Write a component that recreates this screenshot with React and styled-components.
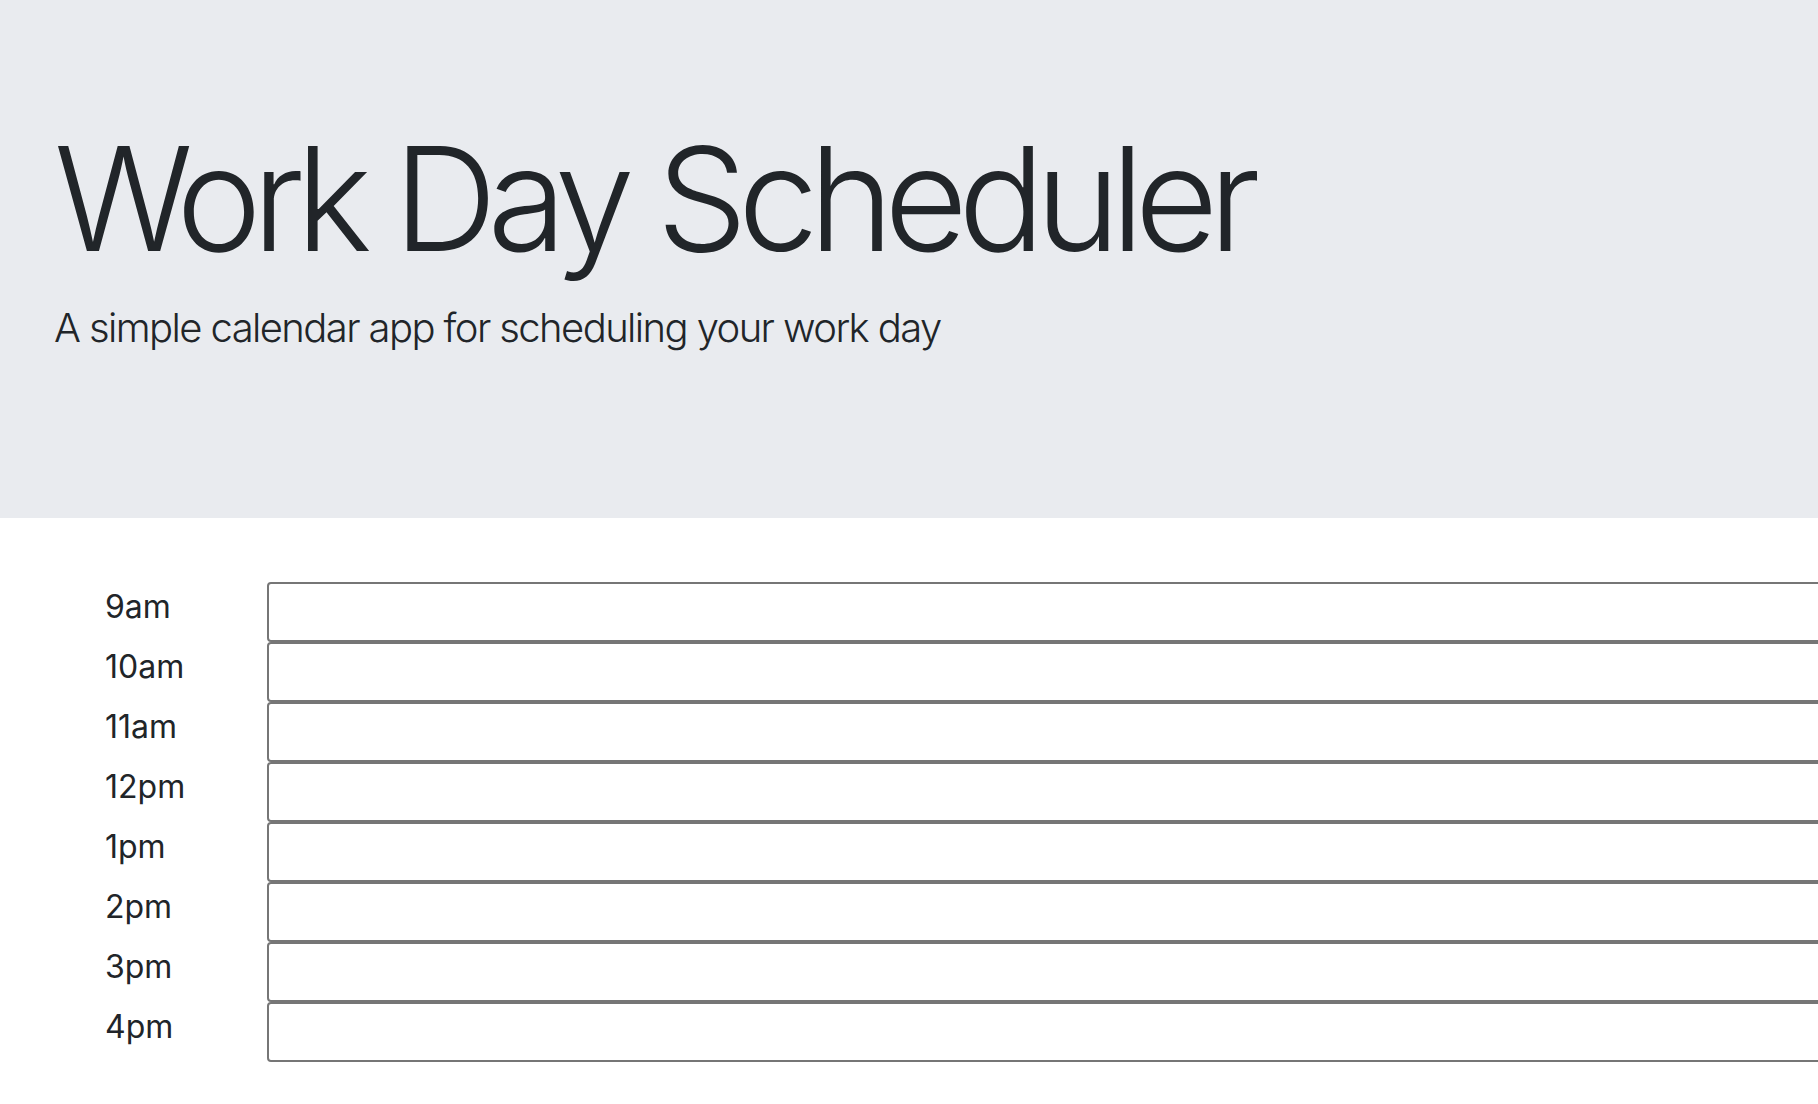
import React from "react";
import styled, { createGlobalStyle } from "styled-components";

const GlobalStyle = createGlobalStyle`
  html, body {
    margin: 0;
    padding: 0;
    overflow-x: hidden;
    background: #ffffff;
    font-family: "Inter", "Noto Sans", "Liberation Sans", sans-serif;
    color: #212529;
  }
`;

const Jumbotron = styled.header`
  box-sizing: border-box;
  height: 518px;
  background: #e9ebef;
  padding: 113px 0 0 54px;
`;

const Title = styled.h1`
  margin: 0 0 12px;
  font-size: 144px;
  font-weight: 300;
  line-height: 1.2;
  letter-spacing: -9.5px;
  white-space: nowrap;
`;

const Lead = styled.p`
  margin: 0;
  font-size: 40px;
  font-weight: 300;
  line-height: 1.5;
  letter-spacing: -1.6px;
  white-space: nowrap;
`;

const Schedule = styled.main`
  display: flex;
  flex-direction: column;
  padding: 64px 0 0 105px;
`;

const Row = styled.div`
  display: flex;
  align-items: flex-start;
  height: 60px;
`;

const Hour = styled.div`
  flex: 0 0 162px;
  box-sizing: border-box;
  padding-top: 1px;
  font-size: 32px;
  line-height: 48px;
  font-weight: 400;
`;

const Entry = styled.textarea`
  flex: 0 0 1700px;
  box-sizing: border-box;
  height: 60px;
  margin: 0;
  border: 2px solid #767676;
  border-radius: 4px;
  background: #ffffff;
  resize: none;
  font-family: inherit;
`;

const hours = ["9am", "10am", "11am", "12pm", "1pm", "2pm", "3pm", "4pm"];

export default function App() {
  return (
    <>
      <GlobalStyle />
      <Jumbotron>
        <Title>Work Day Scheduler</Title>
        <Lead>A simple calendar app for scheduling your work day</Lead>
      </Jumbotron>
      <Schedule>
        {hours.map((h) => (
          <Row key={h}>
            <Hour>{h}</Hour>
            <Entry aria-label={h} />
          </Row>
        ))}
      </Schedule>
    </>
  );
}
